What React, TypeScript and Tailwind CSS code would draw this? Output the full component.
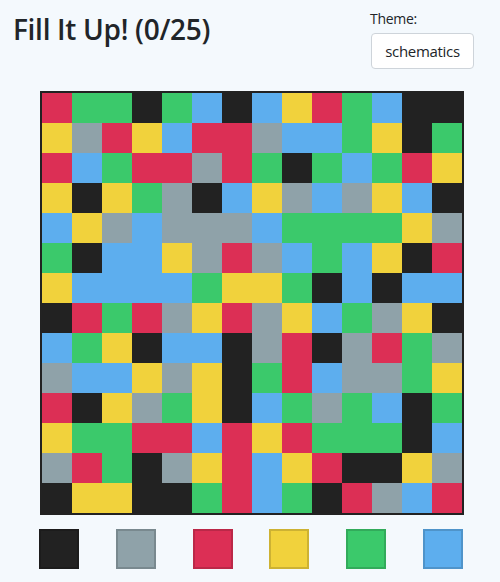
import React from "react";

const COLORS: Record<string, string> = {
  K: "bg-[#222222]",
  G: "bg-[#8fa2a9]",
  R: "bg-[#dc2f55]",
  Y: "bg-[#f1d23c]",
  N: "bg-[#3bc96b]",
  B: "bg-[#5daeee]",
};

const ROWS = [
  "RNNKNBKBYRNBKK",
  "YGRYBRRGBBNYKN",
  "RBNRRGRNKNBNRY",
  "YKYNGKBYGBGYBK",
  "BYGBGGGBNNNNYG",
  "NKBBYGRGBNBYKR",
  "YBBBBNYYNKBKBB",
  "KRNRGYRGYBNGYK",
  "BNYKBBKGRKGRNG",
  "GBBYGYKNRBGGNY",
  "RKYGNYKBNGNBKN",
  "YNNRRBRYRNNNKB",
  "GRNKGYRBYRKKYG",
  "KYYKKNRBNKRGBR",
];

const SWATCHES = ["K", "G", "R", "Y", "N", "B"];

export default function App() {
  return (
    <div
      className="w-[500px] h-[582px] bg-[#f4f9fd] text-[#212529] overflow-hidden"
      style={{ fontFamily: '"Open Sans", "Noto Sans", sans-serif' }}
    >
      <div className="flex justify-between pl-[13px] pr-[26px] pt-[10px]">
        <h1 className="text-[28px] font-semibold leading-none mt-[5px] tracking-[-0.3px]">
          Fill It Up! (0/25)
        </h1>
        <div className="flex flex-col">
          <span className="text-[14px] leading-[18px] ml-[-1px] tracking-[-0.3px]">Theme:</span>
          <div className="mt-[5px] w-[103px] h-[36px] bg-white border border-[#ced4da] rounded-[4px] flex items-center justify-center text-[15px] tracking-[-0.3px]">
            schematics
          </div>
        </div>
      </div>
      <div className="pl-[40px] mt-[22px] w-[464px]">
        <div className="border-2 border-[#222222] w-[424px]">
          <div className="grid grid-cols-[repeat(14,30px)]">
            {ROWS.flatMap((row, r) =>
              row.split("").map((c, i) => (
                <div key={`${r}-${i}`} className={`h-[30px] ${COLORS[c]}`} />
              ))
            )}
          </div>
        </div>
        <div className="flex justify-between mt-[14px] w-[424px] -ml-px">
          {SWATCHES.map((c) => (
            <div
              key={c}
              className={`w-[40px] h-[40px] border-2 border-black/15 ${COLORS[c]}`}
            />
          ))}
        </div>
      </div>
    </div>
  );
}
